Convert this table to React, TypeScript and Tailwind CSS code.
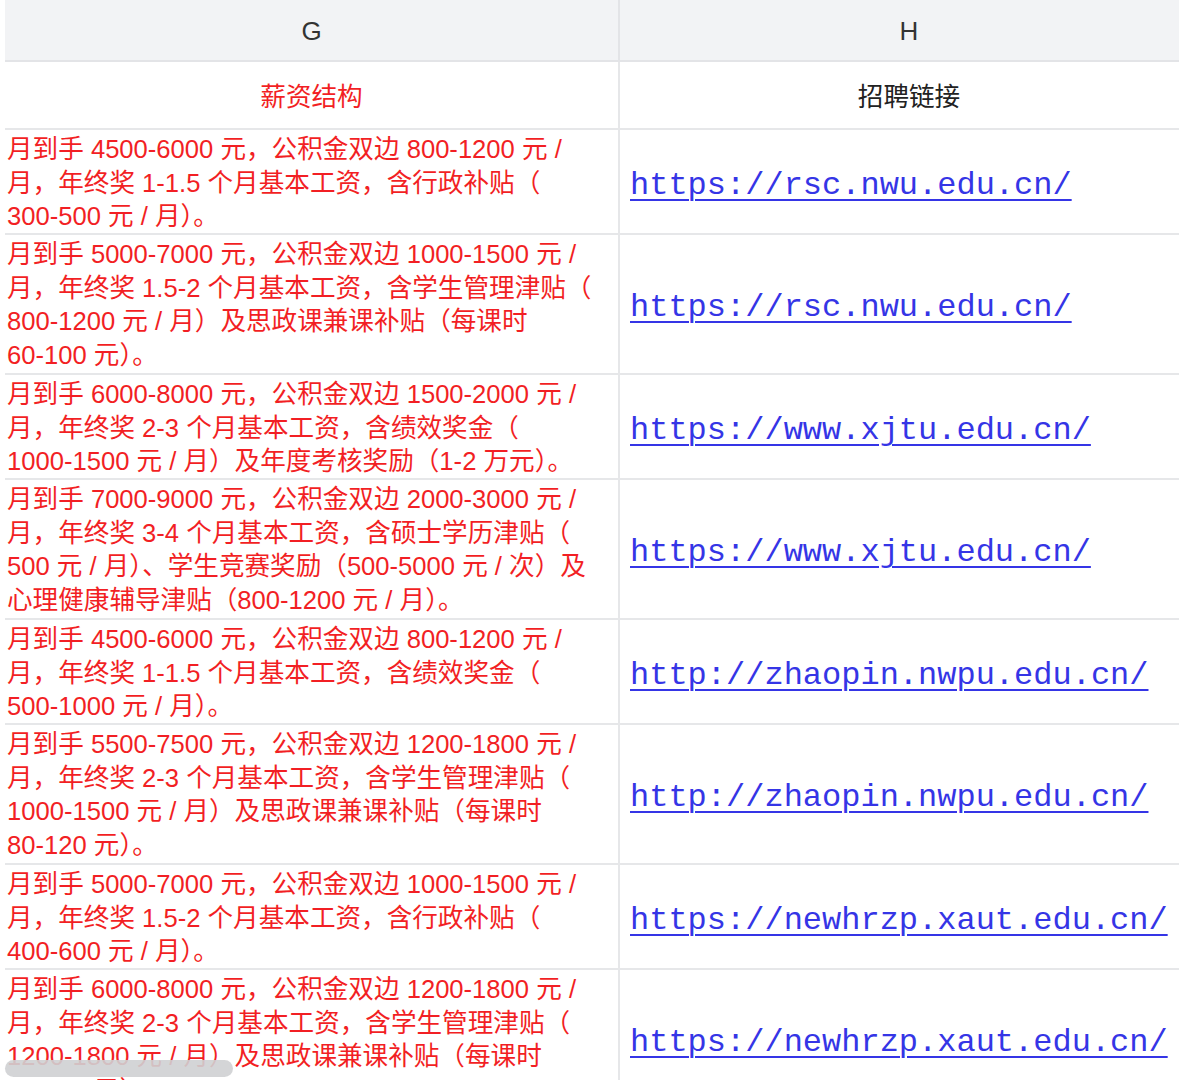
import React from "react";

type Row = { lines: string[]; link: string };

const rows: Row[] = [
  {
    lines: [
      "月到手 4500-6000 元，公积金双边 800-1200 元 /",
      "月，年终奖 1-1.5 个月基本工资，含行政补贴（",
      "300-500 元 / 月）。",
    ],
    link: "https://rsc.nwu.edu.cn/",
  },
  {
    lines: [
      "月到手 5000-7000 元，公积金双边 1000-1500 元 /",
      "月，年终奖 1.5-2 个月基本工资，含学生管理津贴（",
      "800-1200 元 / 月）及思政课兼课补贴（每课时",
      "60-100 元）。",
    ],
    link: "https://rsc.nwu.edu.cn/",
  },
  {
    lines: [
      "月到手 6000-8000 元，公积金双边 1500-2000 元 /",
      "月，年终奖 2-3 个月基本工资，含绩效奖金（",
      "1000-1500 元 / 月）及年度考核奖励（1-2 万元）。",
    ],
    link: "https://www.xjtu.edu.cn/",
  },
  {
    lines: [
      "月到手 7000-9000 元，公积金双边 2000-3000 元 /",
      "月，年终奖 3-4 个月基本工资，含硕士学历津贴（",
      "500 元 / 月）、学生竞赛奖励（500-5000 元 / 次）及",
      "心理健康辅导津贴（800-1200 元 / 月）。",
    ],
    link: "https://www.xjtu.edu.cn/",
  },
  {
    lines: [
      "月到手 4500-6000 元，公积金双边 800-1200 元 /",
      "月，年终奖 1-1.5 个月基本工资，含绩效奖金（",
      "500-1000 元 / 月）。",
    ],
    link: "http://zhaopin.nwpu.edu.cn/",
  },
  {
    lines: [
      "月到手 5500-7500 元，公积金双边 1200-1800 元 /",
      "月，年终奖 2-3 个月基本工资，含学生管理津贴（",
      "1000-1500 元 / 月）及思政课兼课补贴（每课时",
      "80-120 元）。",
    ],
    link: "http://zhaopin.nwpu.edu.cn/",
  },
  {
    lines: [
      "月到手 5000-7000 元，公积金双边 1000-1500 元 /",
      "月，年终奖 1.5-2 个月基本工资，含行政补贴（",
      "400-600 元 / 月）。",
    ],
    link: "https://newhrzp.xaut.edu.cn/",
  },
  {
    lines: [
      "月到手 6000-8000 元，公积金双边 1200-1800 元 /",
      "月，年终奖 2-3 个月基本工资，含学生管理津贴（",
      "1200-1800 元 / 月）及思政课兼课补贴（每课时",
      "80-120 元）。",
    ],
    link: "https://newhrzp.xaut.edu.cn/",
  },
];

const sans = "font-['Liberation_Sans','Noto_Sans_CJK_SC',sans-serif]";

export default function App() {
  return (
    <div className={`relative w-[1179px] h-[1080px] overflow-hidden bg-white ${sans}`}>
      <div className="pl-[5px] w-[1200px]">
        {/* column letters */}
        <div className="grid grid-cols-[613px_2px_578px] h-[60px] bg-[#f2f3f5] border-b-2 border-[#e3e4e7] box-content">
          <div className="flex items-center justify-center pt-[3px] text-[26px] text-[#333]">G</div>
          <div className="bg-[#e3e4e7]" />
          <div className="flex items-center justify-center pt-[3px] text-[26px] text-[#333]">H</div>
        </div>

        {/* title row */}
        <div className="grid grid-cols-[613px_2px_578px] h-[66px] border-b-2 border-[#e6e7e9] box-content">
          <div className="flex items-center justify-center pt-[4px] text-[25.6px] text-[#f21f24]">薪资结构</div>
          <div className="bg-[#e6e7e9]" />
          <div className="flex items-center justify-center pt-[4px] text-[25.6px] text-[#222]">招聘链接</div>
        </div>

        {rows.map((r, i) => (
          <div
            key={i}
            className={`grid grid-cols-[613px_2px_578px] border-b-2 border-[#e6e7e9] box-content ${
              r.lines.length > 3 ? "h-[138px]" : "h-[103px]"
            }`}
          >
            <div className="pl-[2px] pt-[3px] text-[25.6px] leading-[33.7px] text-[#f21f24] whitespace-nowrap">
              {r.lines.map((l, j) => (
                <div key={j}>{l}</div>
              ))}
            </div>
            <div className="bg-[#e6e7e9]" />
            <div className="flex items-center pl-[10px] pt-[8px]">
              <a
                href="#"
                className="font-['Liberation_Mono',monospace] text-[32px] leading-none text-[#3535e6] underline decoration-2 underline-offset-[5px]"
              >
                {r.link}
              </a>
            </div>
          </div>
        ))}
      </div>

      {/* horizontal scrollbar */}
      <div className="absolute left-[5px] top-[1060px] w-[228px] h-[17px] rounded-full bg-[#cfd0d3]/90" />
    </div>
  );
}
